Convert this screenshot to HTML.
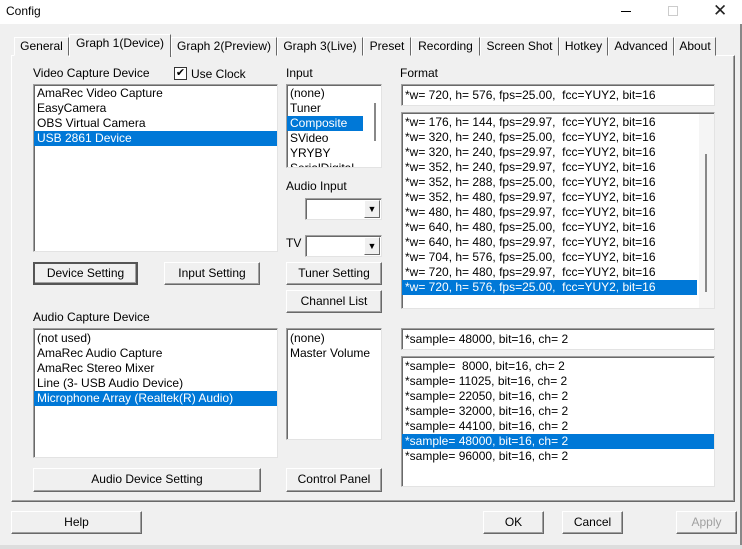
<!DOCTYPE html>
<html><head><style>
*{box-sizing:border-box;margin:0;padding:0}
body{width:742px;height:549px;background:#f0f0f0;font-family:"Liberation Sans",sans-serif;font-size:12px;color:#000;position:relative;overflow:hidden}
.a{position:absolute;white-space:nowrap}
.title{left:0;top:0;width:742px;height:24px;background:#fff}
.lb{position:absolute;background:#fff;border-top:1px solid #a0a0a0;border-left:1px solid #a0a0a0;border-right:1px solid #e3e3e3;border-bottom:1px solid #e3e3e3;box-shadow:inset 1px 1px 0 #696969;overflow:hidden}
.row{height:15px;line-height:15px;padding-left:3px;white-space:nowrap}
.sel{background:#0078d7;color:#fff}
.btn{position:absolute;background:#f0f0f0;border:1px solid;border-color:#fff #696969 #696969 #fff;box-shadow:inset -1px -1px 0 #a0a0a0;text-align:center;line-height:20px}
.tab{position:absolute;top:37px;height:19px;border:1px solid;border-color:#fff #696969 transparent #fff;line-height:17px;text-align:center;background:#f0f0f0}
.dd{position:absolute;right:1px;top:1px;width:16px;height:18px;background:#f0f0f0;border:1px solid;border-color:#fff #696969 #696969 #fff;font-size:9px;text-align:center;line-height:16px;color:#000}
</style></head><body>
<div class="a title"></div>
<div class="a" style="left:6px;top:4px;font-size:12px">Config</div>
<div class="a" style="left:621px;top:11px;width:10px;height:1px;background:#000"></div>
<div class="a" style="left:668px;top:6px;width:10px;height:10px;border:1px solid #ccc"></div>
<div class="a" style="left:713px;top:1px;font-size:17px;color:#222">✕</div>
<div class="a" style="left:740px;top:24px;width:2px;height:525px;background:#888"></div>
<div class="a" style="left:0;top:545px;width:742px;height:4px;background:#ddd"></div>

<div class="a" style="left:11px;top:55px;width:724px;height:447px;border:1px solid;border-color:#fff #696969 #696969 #fff;box-shadow:inset -1px -1px 0 #a0a0a0"></div>

<div class="tab" style="left:14px;width:55px">General</div>
<div class="tab" style="left:69px;top:34px;height:23px;width:102px;border-bottom:none">Graph 1(Device)</div>
<div class="tab" style="left:171px;width:106px">Graph 2(Preview)</div>
<div class="tab" style="left:277px;width:86px">Graph 3(Live)</div>
<div class="tab" style="left:363px;width:48px">Preset</div>
<div class="tab" style="left:411px;width:69px">Recording</div>
<div class="tab" style="left:480px;width:79px">Screen Shot</div>
<div class="tab" style="left:559px;width:49px">Hotkey</div>
<div class="tab" style="left:608px;width:66px">Advanced</div>
<div class="tab" style="left:674px;width:42px">About</div>

<div class="a" style="left:33px;top:66px">Video Capture Device</div>
<div class="a" style="left:174px;top:67px;width:13px;height:13px;background:#fff;border:1px solid #333;font-size:11px;line-height:11px;text-align:center">✔</div>
<div class="a" style="left:191px;top:67px">Use Clock</div>
<div class="lb" style="left:33px;top:84px;width:245px;height:168px;padding-top:1px">
<div class="row">AmaRec Video Capture</div><div class="row">EasyCamera</div><div class="row">OBS Virtual Camera</div><div class="row sel">USB 2861 Device</div></div>

<div class="a" style="left:286px;top:66px">Input</div>
<div class="lb" style="left:286px;top:84px;width:96px;height:84px;padding-top:1px">
<div class="row">(none)</div><div class="row">Tuner</div><div class="row sel" style="width:76px">Composite</div><div class="row">SVideo</div><div class="row">YRYBY</div><div class="row">SerialDigital</div>
<div style="position:absolute;left:87px;top:18px;width:2px;height:38px;background:#888"></div></div>

<div class="a" style="left:286px;top:179px">Audio Input</div>
<div class="lb" style="left:305px;top:198px;width:77px;height:22px"><div class="dd">▼</div></div>
<div class="a" style="left:286px;top:236px">TV</div>
<div class="lb" style="left:305px;top:235px;width:77px;height:22px"><div class="dd">▼</div></div>

<div class="btn" style="left:33px;top:262px;width:105px;height:23px;border:2px solid #555;line-height:19px">Device Setting</div>
<div class="btn" style="left:164px;top:262px;width:96px;height:23px">Input Setting</div>
<div class="btn" style="left:286px;top:262px;width:96px;height:23px">Tuner Setting</div>
<div class="btn" style="left:286px;top:290px;width:96px;height:23px">Channel List</div>

<div class="a" style="left:400px;top:66px">Format</div>
<div class="lb" style="left:401px;top:84px;width:314px;height:22px;padding:3px 0 0 3px">*w= 720, h= 576, fps=25.00,&nbsp; fcc=YUY2, bit=16</div>
<div class="lb" style="left:401px;top:112px;width:314px;height:197px;padding-top:2px">
<div class="row">*w= 176, h= 144, fps=29.97,&nbsp; fcc=YUY2, bit=16</div>
<div class="row">*w= 320, h= 240, fps=25.00,&nbsp; fcc=YUY2, bit=16</div>
<div class="row">*w= 320, h= 240, fps=29.97,&nbsp; fcc=YUY2, bit=16</div>
<div class="row">*w= 352, h= 240, fps=29.97,&nbsp; fcc=YUY2, bit=16</div>
<div class="row">*w= 352, h= 288, fps=25.00,&nbsp; fcc=YUY2, bit=16</div>
<div class="row">*w= 352, h= 480, fps=29.97,&nbsp; fcc=YUY2, bit=16</div>
<div class="row">*w= 480, h= 480, fps=29.97,&nbsp; fcc=YUY2, bit=16</div>
<div class="row">*w= 640, h= 480, fps=25.00,&nbsp; fcc=YUY2, bit=16</div>
<div class="row">*w= 640, h= 480, fps=29.97,&nbsp; fcc=YUY2, bit=16</div>
<div class="row">*w= 704, h= 576, fps=25.00,&nbsp; fcc=YUY2, bit=16</div>
<div class="row">*w= 720, h= 480, fps=29.97,&nbsp; fcc=YUY2, bit=16</div>
<div class="row sel" style="width:295px">*w= 720, h= 576, fps=25.00,&nbsp; fcc=YUY2, bit=16</div>
<div style="position:absolute;left:297px;top:1px;width:15px;height:194px;background:#f5f5f5"></div>
<div style="position:absolute;left:303px;top:41px;width:2px;height:138px;background:#888"></div></div>

<div class="a" style="left:33px;top:310px">Audio Capture Device</div>
<div class="lb" style="left:33px;top:328px;width:245px;height:130px;padding-top:2px">
<div class="row">(not used)</div><div class="row">AmaRec Audio Capture</div><div class="row">AmaRec Stereo Mixer</div><div class="row">Line (3- USB Audio Device)</div><div class="row sel">Microphone Array (Realtek(R) Audio)</div></div>
<div class="lb" style="left:286px;top:328px;width:96px;height:112px;padding-top:2px">
<div class="row">(none)</div><div class="row">Master Volume</div></div>

<div class="lb" style="left:401px;top:328px;width:314px;height:22px;padding:3px 0 0 3px">*sample= 48000, bit=16, ch= 2</div>
<div class="lb" style="left:401px;top:356px;width:314px;height:131px;padding-top:2px">
<div class="row">*sample=&nbsp; 8000, bit=16, ch= 2</div>
<div class="row">*sample= 11025, bit=16, ch= 2</div>
<div class="row">*sample= 22050, bit=16, ch= 2</div>
<div class="row">*sample= 32000, bit=16, ch= 2</div>
<div class="row">*sample= 44100, bit=16, ch= 2</div>
<div class="row sel">*sample= 48000, bit=16, ch= 2</div>
<div class="row">*sample= 96000, bit=16, ch= 2</div></div>

<div class="btn" style="left:33px;top:468px;width:228px;height:24px">Audio Device Setting</div>
<div class="btn" style="left:286px;top:468px;width:96px;height:24px">Control Panel</div>

<div class="btn" style="left:11px;top:511px;width:131px;height:23px">Help</div>
<div class="btn" style="left:483px;top:511px;width:61px;height:23px">OK</div>
<div class="btn" style="left:562px;top:511px;width:61px;height:23px">Cancel</div>
<div class="btn" style="left:676px;top:511px;width:61px;height:23px;color:#a0a0a0">Apply</div>
</body></html>
